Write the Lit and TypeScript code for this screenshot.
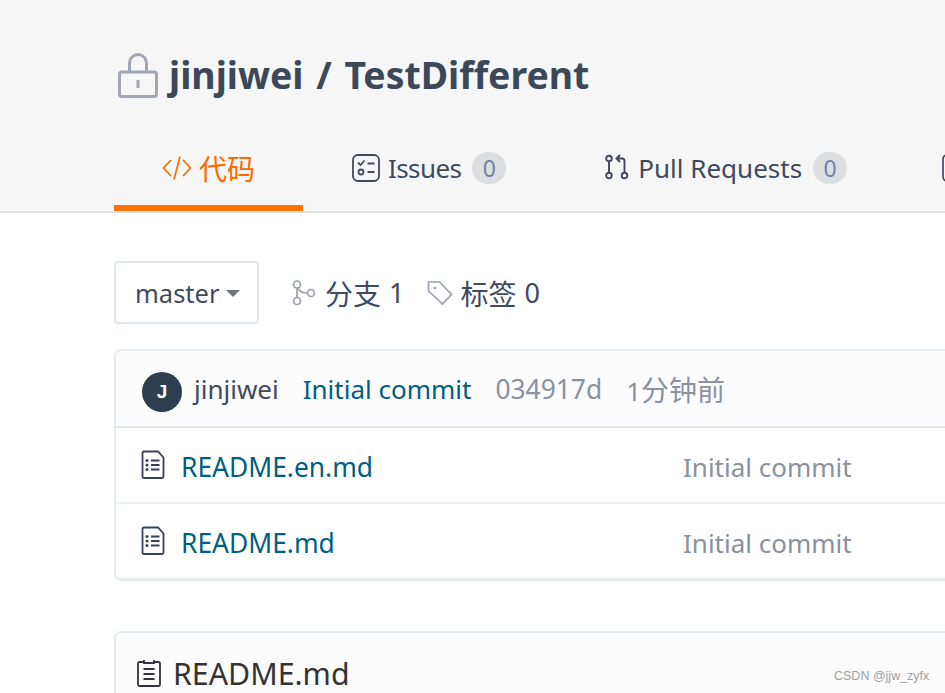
import { LitElement, html, css } from "lit";
import { customElement } from "lit/decorators.js";

const docIcon = html`<svg class="file-ico" viewBox="0 0 24 30" width="24" height="30" fill="none" stroke="#36415a" stroke-width="1.800">
  <path d="M1.500 3q0-1.500 1.500-1.500h14l5.500 6v19q0 1.500-1.500 1.500H3q-1.500 0-1.500-1.500z"/>
  <path d="M10 10.500h8.500M10 15h8.500M10 19.500h8.500"/>
  <circle cx="6" cy="10.500" r="1.500" fill="#36415a" stroke="none"/>
  <circle cx="6" cy="15" r="1.500" fill="#36415a" stroke="none"/>
  <circle cx="6" cy="19.500" r="1.500" fill="#36415a" stroke="none"/>
</svg>`;

@customElement("app-root")
export class AppRoot extends LitElement {
  static styles = css`
    :host {
      display: block;
      position: relative;
      width: 945px;
      height: 693px;
      overflow: hidden;
      background: #fff;
      font-family: "Noto Sans", "Noto Sans CJK SC", sans-serif;
      color: #3f4a5f;
    }
    .cj { font-size: 28px; }
    .head {
      background: #f6f6f6;
      border-bottom: 2px solid #e0e0e0;
      height: 211px;
      padding-left: 114px;
      display: flex;
      flex-direction: column;
      white-space: nowrap;
    }
    .title {
      display: flex;
      align-items: center;
      box-sizing: border-box;
      height: 131px;
      padding-top: 19px;
      font-size: 37.400px;
      word-spacing: 3px;
      font-weight: 700;
      color: #3c4858;
    }
    .title svg { margin: 1px 11px 0 4px; flex: none; }
    .tabs { display: flex; height: 82px; flex: none; }
    .tab {
      display: flex;
      align-items: center;
      font-size: 26px;
      height: 74px;
      padding-top: 2px;
      border-bottom: 6px solid transparent;
      flex: none;
    }
    .tab.on { color: #ff6a00; border-bottom-color: #ff7200; width: 141px; padding-left: 48px; }
    .tab svg { flex: none; }
    .t2 { margin-left: 49px; }
    .t2 .txt { letter-spacing: -0.6px; }
    .t3 { margin-left: 99px; }
    .t4 { margin-left: 95px; }
    .badge {
      width: 34px; height: 32px; border-radius: 16px;
      background: #dcdee0; color: #6f83ad;
      display: flex; align-items: center; justify-content: center;
      font-size: 23px; margin-left: 11px;
    }
    .main { padding: 48px 0 0 114px; }
    .bar { display: flex; align-items: center; height: 63px; white-space: nowrap; }
    .branch {
      box-sizing: border-box;
      width: 145px; height: 63px;
      border: 2px solid #e2e8ee; border-radius: 4px;
      display: flex; align-items: center; padding-left: 19px;
      font-size: 25.500px; color: #3f4a5f;
    }
    .caret {
      width: 0; height: 0; margin-left: 7px; margin-top: 1px;
      border-left: 7px solid transparent; border-right: 7px solid transparent;
      border-top: 7px solid #6c7280;
    }
    .stat { display: flex; align-items: center; font-size: 27px; color: #3f4a5f; }
    .stat svg { flex: none; }
    .gap { margin-left: 8px; }
    .s1 { margin-left: 33px; }
    .s2 { margin-left: 23px; }
    .card {
      width: 1000px;
      border: 2px solid #e6ebf0;
      border-radius: 7px;
      box-sizing: border-box;
    }
    .c1 { margin-top: 25px; height: 232px; overflow: hidden; border-bottom-width: 3px; }
    .c2 { margin-top: 50px; height: 120px; background: #fcfcfc; }
    .commit {
      height: 75px; background: #fcfcfc;
      border-bottom: 2px solid #e4e8ec;
      display: flex; align-items: center;
      font-size: 26px; white-space: nowrap;
      padding-left: 26px;
    }
    .avatar {
      width: 40px; height: 40px; border-radius: 50%;
      background: #2d3e50; color: #fff;
      display: flex; align-items: center; justify-content: center;
      font: 700 19px "Liberation Sans", sans-serif;
      margin: 6px 12px 0 0; flex: none;
    }
    .link { color: #005f7f; }
    .muted { color: #8a919f; }
    .g { margin-left: 24px; }
    .hash { font-size: 26.400px; }
    .row {
      height: 71px;
      padding-top: 3px;
      display: flex; align-items: center;
      font-size: 26px; white-space: nowrap;
      padding-left: 25px;
      border-bottom: 2px solid #eef1f4;
    }
    .row:last-child { border-bottom: none; }
    .file-ico { flex: none; margin-top: -4px; }
    .row .name { width: 502px; margin-left: 16px; font-size: 26.400px; }
    .rd {
      display: flex; align-items: center; height: 80px; padding-left: 21px;
      font-size: 30.300px; color: #333; white-space: nowrap;
    }
    .rd svg { margin-right: 12px; flex: none; }
    .mark {
      position: absolute; left: 834px; top: 669px;
      font: 12.500px "Liberation Sans", sans-serif; color: #a0a0a0;
      white-space: nowrap;
    }
  `;

  render() {
    return html`
      <div class="head">
        <div class="title">
          <svg width="40" height="46" viewBox="0 0 40 46" fill="none" stroke="#a0a6b4" stroke-width="3">
            <path d="M11.500 20v-9a8.500 8.500 0 0 1 17 0V20"/>
            <rect x="1.500" y="20" width="37" height="24.500" rx="2.500"/>
            <path d="M20 28v8"/>
          </svg>
          <span>jinjiwei / TestDifferent</span>
        </div>
        <div class="tabs">
          <div class="tab on">
            <svg width="30" height="26" viewBox="0 0 30 26" fill="none" stroke="#ff6a00" stroke-width="1.700" style="margin-right:7px">
              <path d="M9 5 1.500 13 9 21M21 5l7.500 8L21 21M18 1.500 12 24.500"/>
            </svg><span class="cj">代码</span>
          </div>
          <div class="tab t2">
            <svg width="28" height="28" viewBox="0 0 28 28" fill="none" stroke="#3f4a5f" stroke-width="1.800" style="margin-right:8px">
              <rect x="1" y="1" width="26" height="26" rx="5"/>
              <path d="M6 8.500l2.500 2.500 4-4.500M15.500 9.500h7M15.500 18h7"/>
              <circle cx="9" cy="18" r="2.500"/>
            </svg><span class="txt">Issues</span><span class="badge">0</span>
          </div>
          <div class="tab t3">
            <svg width="24" height="28" viewBox="0 0 24 28" fill="none" stroke="#3f4a5f" stroke-width="1.900" style="margin-right:9px">
              <circle cx="4" cy="4.500" r="2.800"/><circle cx="4" cy="21.500" r="2.800"/><circle cx="19.500" cy="21.500" r="2.800"/>
              <path d="M4 7.300v11.400M19.500 18.700V7q0-2.500-2.500-2.500h-5M15 1l-3.500 3.500L15 8"/>
            </svg>Pull Requests<span class="badge">0</span>
          </div>
          <div class="tab t4">
            <svg width="24" height="28" viewBox="0 0 24 28" fill="none" stroke="#3f4a5f" stroke-width="1.700"><rect x="1" y="1" width="22" height="26" rx="4"/></svg>
          </div>
        </div>
      </div>
      <div class="main">
        <div class="bar">
          <div class="branch">master<span class="caret"></span></div>
          <div class="stat s1">
            <svg width="24" height="26" viewBox="0 0 24 26" fill="none" stroke="#9aa0ae" stroke-width="1.700" style="margin-right:9px">
              <circle cx="5" cy="4.500" r="3.500"/><circle cx="5" cy="21" r="3.500"/><circle cx="19" cy="13" r="3.500"/>
              <path d="M5 8v9.500M6 8c1 3 4 5 9.500 5"/>
            </svg><span class="cj">分支</span><span class="gap">1</span>
          </div>
          <div class="stat s2">
            <svg width="26" height="26" viewBox="0 0 26 26" fill="none" stroke="#9aa0ae" stroke-width="1.700" style="margin-right:7px">
              <path d="M1.500 2h11l12 12.500-9 9.500L1.500 11z"/>
              <circle cx="8" cy="8" r="1.300" fill="#9aa0ae" stroke="none"/>
            </svg><span class="cj">标签</span><span class="gap">0</span>
          </div>
        </div>
        <div class="card c1">
          <div class="commit">
            <div class="avatar">J</div>
            <span>jinjiwei</span>
            <span class="link g">Initial commit</span>
            <span class="muted g hash">034917d</span>
            <span class="muted g">1<span class="cj">分钟前</span></span>
          </div>
          <div class="row">${docIcon}<span class="name link">README.en.md</span><span class="muted">Initial commit</span></div>
          <div class="row">${docIcon}<span class="name link">README.md</span><span class="muted">Initial commit</span></div>
        </div>
        <div class="card c2">
          <div class="rd">
            <svg width="24" height="28" viewBox="0 0 24 28" fill="none" stroke="#33333f" stroke-width="1.800">
              <path d="M7 3H2.500q-1.500 0-1.500 1.500v21q0 1.500 1.500 1.500h19q1.500 0 1.500-1.500v-21Q23 3 21.500 3H17"/>
              <path d="M7 1v3h10V1M6.500 10h11M6.500 15h11M6.500 20h11"/>
            </svg>README.md
          </div>
        </div>
      </div>
      <div class="mark">CSDN @jjw_zyfx</div>
    `;
  }
}
